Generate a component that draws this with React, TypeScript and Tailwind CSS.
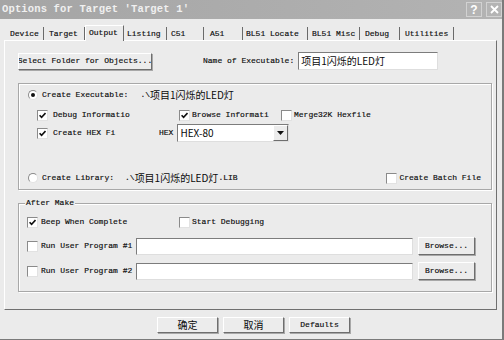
import React from "react";
import clsx from "clsx";

const mono = "font-['Liberation_Mono','DejaVu_Sans_Mono',monospace]";
const cjk = "font-['Noto_Sans_CJK_SC','Noto_Sans_CJK_JP',sans-serif]";

const tabs = [
  { label: "Device", w: "w-[40px]", pl: "pl-[6px]" },
  { label: "Target", w: "w-[41px]", pl: "pl-[5px]" },
  { label: "Output", w: "w-[39px]", pl: "pl-[3px]", active: true },
  { label: "Listing", w: "w-[43px]", pl: "pl-[3px]" },
  { label: "C51", w: "w-[37px]", pl: "pl-[4px]" },
  { label: "A51", w: "w-[39px]", pl: "pl-[6px]" },
  { label: "BL51 Locate", w: "w-[65px]", pl: "pl-[3px]" },
  { label: "BL51 Misc", w: "w-[52px]", pl: "pl-[4px]" },
  { label: "Debug", w: "w-[40px]", pl: "pl-[5px]" },
  { label: "Utilities", w: "w-[54px]", pl: "pl-[5px]" },
];

function CheckBox({ checked = false }: { checked?: boolean }) {
  return (
    <span className="flex h-[11px] w-[11px] shrink-0 items-center justify-center border border-t-[#8a8a8a] border-l-[#8a8a8a] border-r-[#e2e2e2] border-b-[#e2e2e2] bg-white">
      {checked && (
        <svg width="7" height="7" viewBox="0 0 7 7">
          <path d="M0.6 3.2 L2.6 5.4 L6.5 1.1" fill="none" stroke="#111" strokeWidth="1.6" />
        </svg>
      )}
    </span>
  );
}

function Radio({ checked = false }: { checked?: boolean }) {
  return (
    <span className="flex h-[10px] w-[10px] shrink-0 items-center justify-center rounded-full border border-t-[#8a8a8a] border-l-[#8a8a8a] border-r-[#e2e2e2] border-b-[#e2e2e2] bg-white">
      {checked && <span className="h-[4px] w-[4px] rounded-full bg-[#111]" />}
    </span>
  );
}

function Btn({ className, children }: { className?: string; children: React.ReactNode }) {
  return (
    <div
      className={clsx(
        "flex shrink-0 items-center justify-center overflow-hidden whitespace-nowrap border border-t-white border-l-white border-r-[#6e6e6e] border-b-[#6e6e6e] bg-[#ececec] shadow-[1px_1px_0_#a8a8a8]",
        className
      )}
    >
      {children}
    </div>
  );
}

const sunken = "border border-t-[#7c7c7c] border-l-[#7c7c7c] border-r-[#dedede] border-b-[#dedede] bg-white";
const etched = "border border-[#a8a8a8] shadow-[inset_1px_1px_0_#fff,1px_1px_0_#fff]";

export default function App() {
  return (
    <div className={clsx("flex h-[340px] w-[504px] flex-col overflow-hidden border-r-2 border-b border-[#7a7a7a] bg-[#ebebeb] text-[8px] leading-none text-[#0a0a0a] [-webkit-text-stroke:0.15px_#0a0a0a]", mono)}>
      {/* title bar */}
      <div className="flex h-[19px] shrink-0 items-center justify-between bg-gradient-to-r from-[#a5a5a5] to-[#b3b3b3] pl-[2px] [-webkit-text-stroke:0px]">
        <span className="text-[10.5px] font-bold tracking-[0.15px] text-[#f0f0f0]">Options for Target 'Target 1'</span>
        <div className="flex gap-[4px]">
          <span className="flex h-[15px] w-[16px] items-center justify-center border border-[#d2d2d2] bg-[#b4b4b4] font-['Liberation_Sans',sans-serif] text-[12px] font-bold text-white">?</span>
          <span className="flex h-[15px] w-[16px] items-center justify-center border border-[#d2d2d2] bg-[#b4b4b4]">
            <svg width="9" height="9" viewBox="0 0 9 9">
              <path d="M1 1 L8 8 M8 1 L1 8" stroke="#fff" strokeWidth="1.8" />
            </svg>
          </span>
        </div>
      </div>

      {/* tabs */}
      <div className="mt-[6px] flex h-[15px] shrink-0 items-end pl-[4px]">
        {tabs.map((t) => (
          <div
            key={t.label}
            className={clsx(
              "flex shrink-0 items-center whitespace-nowrap border-r border-r-[#6a6a6a]",
              t.w,
              t.pl,
              t.active
                ? "relative z-10 -mb-px h-[16px] items-start border-t border-l border-t-white border-l-white bg-[#ebebeb] pt-[3px]"
                : "h-[13px]"
            )}
          >
            {t.label}
          </div>
        ))}
      </div>

      {/* panel */}
      <div className="ml-[4px] flex h-[270px] w-[493px] shrink-0 flex-col border border-t-white border-l-white border-r-[#707070] border-b-[#707070] px-[13px] pt-[11px]">
        <div className="flex h-[18px] items-center">
          <Btn className="h-[17px] w-[134px]">Select Folder for Objects...</Btn>
          <span className="ml-[51px] whitespace-nowrap">Name of Executable:</span>
          <div className={clsx("ml-[4px] flex h-[18px] w-[140px] items-center pl-[2px] text-[10px] [-webkit-text-stroke:0px]", sunken, cjk)}>项目1闪烁的LED灯</div>
        </div>

        {/* create executable group */}
        <div className={clsx("mt-[13px] flex h-[107px] w-[474px] shrink-0 flex-col", etched)}>
          <div className="mt-[5px] flex h-[12px] items-center pl-[9px]">
            <Radio checked />
            <span className="ml-[4px]">Create Executable:</span>
            <span className="ml-[12px] flex items-center">
              .\<span className={clsx("text-[10px] [-webkit-text-stroke:0px]", cjk)}>项目1闪烁的LED灯</span>
            </span>
          </div>
          <div className="mt-[8px] flex h-[12px] items-center pl-[18px]">
            <span className="flex w-[142px] items-center">
              <CheckBox checked />
              <span className="ml-[5px]">Debug Informatio</span>
            </span>
            <span className="flex w-[102px] items-center">
              <CheckBox checked />
              <span className="ml-[2px]">Browse Informati</span>
            </span>
            <span className="flex items-center">
              <CheckBox />
              <span className="ml-[2px]">Merge32K Hexfile</span>
            </span>
          </div>
          <div className="mt-[3px] flex h-[18px] items-center pl-[18px]">
            <span className="flex w-[122px] items-center">
              <CheckBox checked />
              <span className="ml-[5px] whitespace-nowrap">Create HEX Fi</span>
            </span>
            <span>HEX</span>
            <div className={clsx("ml-[4px] flex h-[18px] w-[112px] items-center justify-between pl-[2px]", sunken)}>
              <span className={clsx("text-[10px] [-webkit-text-stroke:0px]", cjk)}>HEX-80</span>
              <span className="flex h-[16px] w-[15px] items-center justify-center border border-t-white border-l-white border-r-[#6e6e6e] border-b-[#6e6e6e] bg-[#ececec]">
                <svg width="7" height="4" viewBox="0 0 7 4">
                  <path d="M0 0 H7 L3.5 4 Z" fill="#111" />
                </svg>
              </span>
            </div>
          </div>
          <div className="mt-[30px] flex h-[12px] items-center pl-[9px]">
            <Radio />
            <span className="ml-[4px]">Create Library:</span>
            <span className="ml-[11px] flex items-center">
              .\<span className={clsx("text-[10px] [-webkit-text-stroke:0px]", cjk)}>项目1闪烁的LED灯</span>.LIB
            </span>
            <span className="ml-auto mr-[10px] flex items-center">
              <CheckBox />
              <span className="ml-[2px]">Create Batch File</span>
            </span>
          </div>
        </div>

        {/* after make group */}
        <div className={clsx("relative mt-[13px] flex h-[89px] w-[474px] shrink-0 flex-col", etched)}>
          <span className="absolute left-[6px] top-[-5px] bg-[#ebebeb] px-[1px]">After Make</span>
          <div className="mt-[12px] flex h-[12px] items-center pl-[8px]">
            <span className="flex w-[152px] items-center">
              <CheckBox checked />
              <span className="ml-[3px]">Beep When Complete</span>
            </span>
            <CheckBox />
            <span className="ml-[2px]">Start Debugging</span>
          </div>
          {["#1", "#2"].map((n, i) => (
            <div key={n} className={clsx("flex h-[18px] items-center pl-[8px]", i === 0 ? "mt-[9px]" : "mt-[7px]")}>
              <CheckBox />
              <span className="ml-[3px] w-[93px] whitespace-nowrap">Run User Program {n}</span>
              <div className={clsx("ml-[2px] h-[17px] w-[277px]", sunken)} />
              <Btn className="ml-[5px] h-[18px] w-[57px]">Browse...</Btn>
            </div>
          ))}
        </div>
      </div>

      {/* dialog buttons */}
      <div className="mt-[7px] flex gap-[5px] pl-[157px]">
        <Btn className={clsx("h-[16px] w-[61px] text-[10px] [-webkit-text-stroke:0px]", cjk)}>确定</Btn>
        <Btn className={clsx("h-[16px] w-[61px] text-[10px] [-webkit-text-stroke:0px]", cjk)}>取消</Btn>
        <Btn className="h-[16px] w-[61px]">Defaults</Btn>
      </div>
    </div>
  );
}
